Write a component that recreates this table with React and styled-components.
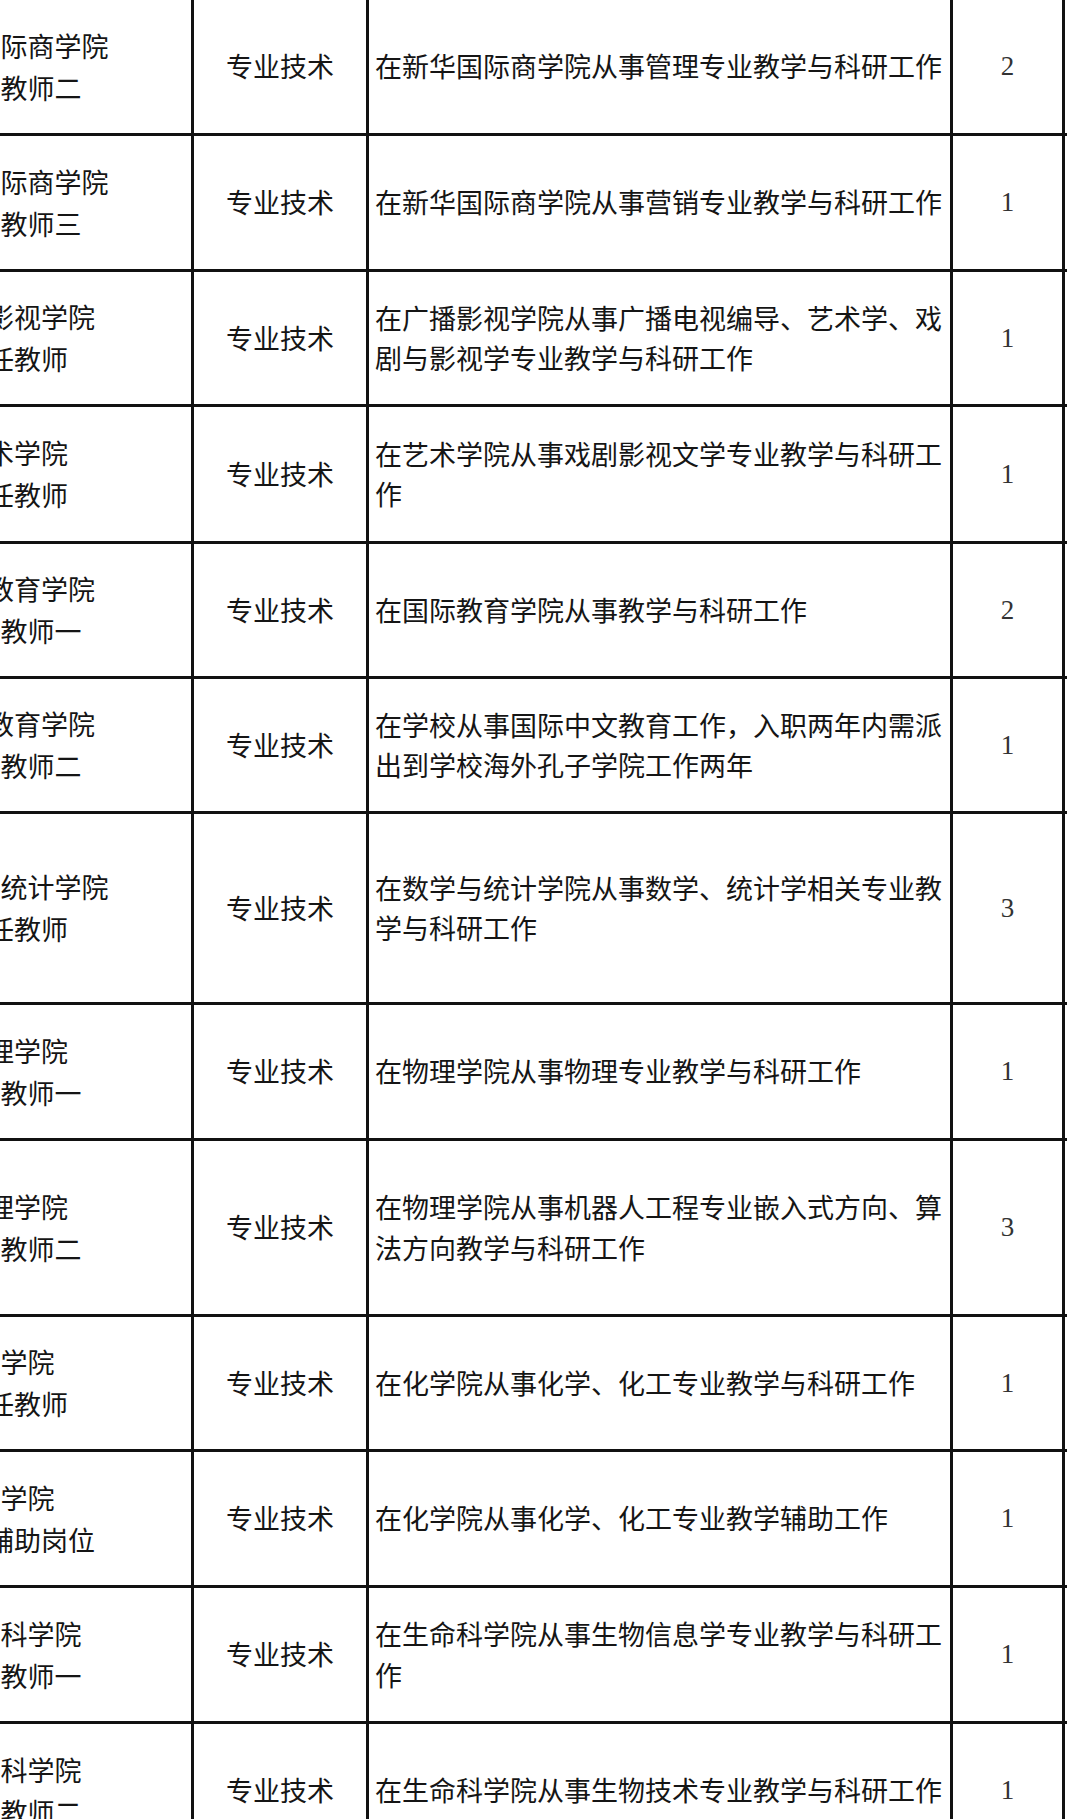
import React from 'react'
import styled, { createGlobalStyle } from 'styled-components'

const GlobalStyle = createGlobalStyle`
  html, body {
    margin: 0;
    padding: 0;
    background: #fff;
    overflow: hidden;
  }
  body {
    font-family: "Noto Sans CJK SC", "Noto Sans", sans-serif;
    color: #151515;
  }
`

const Page = styled.div`
  width: 1067px;
  height: 1819px;
  overflow: hidden;
  background: #fff;
`

// the sheet is cropped on the left, so the table starts off screen
const Sheet = styled.div`
  display: flex;
  flex-direction: column;
  width: 1330px;
  margin-left: -163px;
`

const Row = styled.div`
  display: grid;
  grid-template-columns: 357px 175px 584px 112px 102px;
  height: ${p => p.$height}px;
`

const Cell = styled.div`
  box-sizing: border-box;
  border-right: 3px solid #111;
  border-bottom: 3px solid #111;
  display: flex;
  align-items: center;
  font-size: 27px;
  line-height: 40.5px;
  overflow: hidden;
`

const NameCell = styled(Cell)`
  flex-direction: column;
  justify-content: center;
  text-align: center;
  white-space: nowrap;
  line-height: 42px;
`

const TypeCell = styled(Cell)`
  justify-content: center;
`

const DutyCell = styled(Cell)`
  padding: 0 3px 0 6px;
  word-break: break-all;
`

const CountCell = styled(Cell)`
  justify-content: center;
  font-family: "Liberation Serif", "Times New Roman", serif;
  color: #333;
`

const rows = [
  { h: 136, unit: '新华国际商学院', post: '专任教师二', duty: '在新华国际商学院从事管理专业教学与科研工作', n: 2 },
  { h: 136, unit: '新华国际商学院', post: '专任教师三', duty: '在新华国际商学院从事营销专业教学与科研工作', n: 1 },
  { h: 135, unit: '广播影视学院', post: '专任教师', duty: '在广播影视学院从事广播电视编导、艺术学、戏剧与影视学专业教学与科研工作', n: 1 },
  { h: 137, unit: '艺术学院', post: '专任教师', duty: '在艺术学院从事戏剧影视文学专业教学与科研工作', n: 1 },
  { h: 135, unit: '国际教育学院', post: '专任教师一', duty: '在国际教育学院从事教学与科研工作', n: 2 },
  { h: 135, unit: '国际教育学院', post: '专任教师二', duty: '在学校从事国际中文教育工作，入职两年内需派出到学校海外孔子学院工作两年', n: 1 },
  { h: 191, unit: '数学与统计学院', post: '专任教师', duty: '在数学与统计学院从事数学、统计学相关专业教学与科研工作', n: 3 },
  { h: 136, unit: '物理学院', post: '专任教师一', duty: '在物理学院从事物理专业教学与科研工作', n: 1 },
  { h: 176, unit: '物理学院', post: '专任教师二', duty: '在物理学院从事机器人工程专业嵌入式方向、算法方向教学与科研工作', n: 3 },
  { h: 135, unit: '化学院', post: '专任教师', duty: '在化学院从事化学、化工专业教学与科研工作', n: 1 },
  { h: 136, unit: '化学院', post: '教学辅助岗位', duty: '在化学院从事化学、化工专业教学辅助工作', n: 1 },
  { h: 136, unit: '生命科学院', post: '专任教师一', duty: '在生命科学院从事生物信息学专业教学与科研工作', n: 1 },
  { h: 136, unit: '生命科学院', post: '专任教师二', duty: '在生命科学院从事生物技术专业教学与科研工作', n: 1 }
]

export default function App() {
  return (
    <Page>
      <GlobalStyle />
      <Sheet>
        {rows.map((r, i) => (
          <Row key={i} $height={r.h}>
            <NameCell>
              <span>{r.unit}</span>
              <span>{r.post}</span>
            </NameCell>
            <TypeCell>专业技术</TypeCell>
            <DutyCell>{r.duty}</DutyCell>
            <CountCell>{r.n}</CountCell>
            <Cell />
          </Row>
        ))}
      </Sheet>
    </Page>
  )
}
